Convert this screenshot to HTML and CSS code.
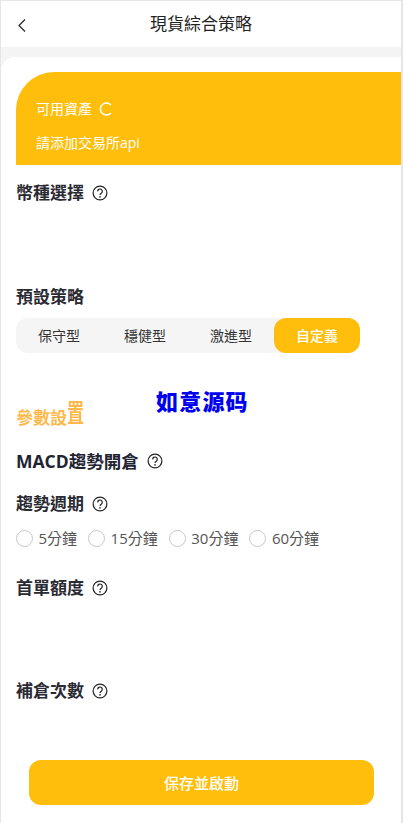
FILE: index.html
```html
<!DOCTYPE html>
<html lang="zh-Hant">
<head>
<meta charset="utf-8">
<title>現貨綜合策略</title>
<link rel="stylesheet" href="styles.css">
</head>
<body>
<div class="app">
  <header class="nav">
    <svg class="back" viewBox="0 0 10 16" width="10" height="16"><path d="M8 2.5 L2 8.5 L8 14.5" fill="none" stroke="#222" stroke-width="1.2"/></svg>
    <h1 class="nav-title">現貨綜合策略</h1>
  </header>
  <main class="sheet">
    <section class="balance">
      <div class="balance-row"><span>可用資產</span>
        <svg class="refresh" viewBox="0 0 14 14" width="14" height="14"><path d="M11.8 3 A6 6 0 1 0 11.8 11" fill="none" stroke="#fff" stroke-width="1.5"/></svg>
      </div>
      <div class="balance-note">請添加交易所api</div>
    </section>

    <div class="label sec-coin">幣種選擇<svg class="help" viewBox="0 0 16 16"><use href="#q"/></svg></div>

    <div class="label sec-preset">預設策略</div>
    <div class="tabs">
      <div class="tab">保守型</div>
      <div class="tab">穩健型</div>
      <div class="tab">激進型</div>
      <div class="tab tab-on">自定義</div>
    </div>

    <div class="params"><span>參數設</span><span class="params-last">置</span></div>

    <div class="label label-big sec-macd">MACD趨勢開倉<svg class="help" viewBox="0 0 16 16"><use href="#q"/></svg></div>
    <div class="label sec-period">趨勢週期<svg class="help" viewBox="0 0 16 16"><use href="#q"/></svg></div>
    <div class="radios">
      <div class="radio"><i class="dot"></i>5分鐘</div>
      <div class="radio"><i class="dot"></i>15分鐘</div>
      <div class="radio"><i class="dot"></i>30分鐘</div>
      <div class="radio"><i class="dot"></i>60分鐘</div>
    </div>
    <div class="label sec-first">首單額度<svg class="help" viewBox="0 0 16 16"><use href="#q"/></svg></div>
    <div class="label sec-add">補倉次數<svg class="help" viewBox="0 0 16 16"><use href="#q"/></svg></div>
    <button class="save">保存並啟動</button>
  </main>
  <div class="mark">如意源码</div>
</div>
<svg width="0" height="0" class="defs"><defs><g id="q"><circle cx="8" cy="8" r="6.9" fill="none" stroke="#222" stroke-width="1.2"/><path d="M5.7 6.4 A2.3 2.3 0 1 1 9.3 8.2 C8.3 8.8 8 9.2 8 10.1" fill="none" stroke="#222" stroke-width="1.2"/><circle cx="8" cy="11.9" r=".8" fill="#222"/></g></defs></svg>
</body>
</html>
```
FILE: styles.css
```css
* { box-sizing: border-box; }
html, body { margin: 0; padding: 0; height: 823px; overflow: hidden; background: #e6e6e6; }
body { font-family: "Open Sans", "Noto Sans CJK TC", sans-serif; color: #222; }
.defs { position: absolute; }
.app { position: relative; margin: 1px 2px 0 1px; height: 822px; background: #f4f4f4; overflow: hidden; }
.nav { height: 46px; background: #fff; display: flex; align-items: center; justify-content: center; position: relative; }
.back { position: absolute; left: 16px; top: 16px; }
.nav-title { margin: 0; font-size: 17px; font-weight: 400; color: #222; line-height: 46px; }
.sheet { margin-top: 10px; height: 766px; background: #fff; border-top-left-radius: 14px; padding-top: 15px; padding-left: 15px; }
.balance { height: 93px; background: #ffbe0b; border-top-left-radius: 38px; color: #fff; font-size: 14px; padding: 26px 0 0 20px; }
.balance-row { display: flex; align-items: center; gap: 7px; height: 22px; line-height: 22px; }
.balance-note { margin-top: 12px; line-height: 22px; height: 22px; }
.label { display: flex; align-items: center; font-size: 17px; font-weight: 700; line-height: 24px; height: 24px; color: #2a2a33; }
.help { width: 16px; height: 16px; margin-left: 8px; flex: none; }
.label-big { font-size: 17.5px; color: #1f2433; }
.sec-coin { margin-top: 16px; }
.sec-preset { margin-top: 80px; }
.tabs { display: flex; width: 344px; height: 35px; margin-top: 9px; background: #f5f5f5; border-radius: 12px; }
.tab { flex: 1; text-align: center; font-size: 14px; line-height: 35px; color: #333; }
.tab-on { background: #ffbe0b; color: #fff; border-radius: 12px; font-weight: 500; }
.params { display: flex; align-items: flex-end; margin-top: 48px; height: 28px; font-size: 17px; font-weight: 700; line-height: 22px; color: #ffb84a; filter: blur(.7px); }
.params-last { display: inline-block; transform: scaleY(1.5); transform-origin: bottom; }
.sec-macd { margin-top: 20px; }
.sec-period { margin-top: 19px; }
.radios { display: flex; margin-top: 10px; gap: 11px; font-size: 15px; line-height: 24px; color: #555; }
.radio { display: flex; align-items: center; gap: 5.5px; }
.dot { width: 17px; height: 17px; border: 1px solid #c8c8c8; border-radius: 50%; background: #fff; }
.sec-first { margin-top: 26px; }
.sec-add { margin-top: 79px; }
.save { display: block; width: 345px; height: 45px; margin: 57px 0 0 13px; border: 0; border-radius: 12px; background: #ffbe0b; color: #fff; font: 500 15px "Open Sans", "Noto Sans CJK TC", sans-serif; }
.mark { position: absolute; left: 155px; top: 385px; font-family: "Noto Sans CJK SC", sans-serif; font-size: 22px; font-weight: 900; letter-spacing: 1.2px; line-height: 28px; color: #0000f0; }
```
